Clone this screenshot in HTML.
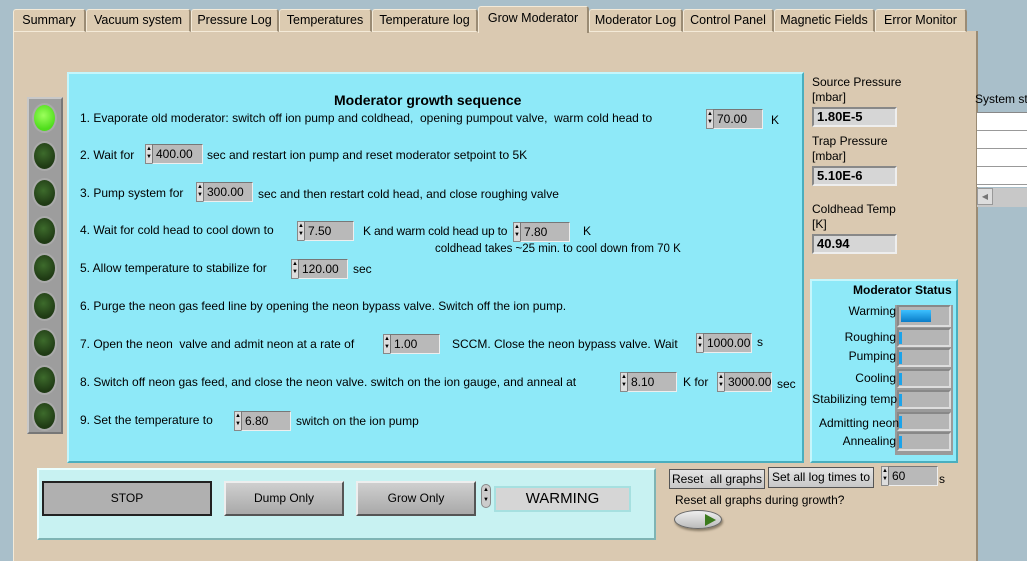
<!DOCTYPE html>
<html><head><style>
*{box-sizing:border-box;margin:0;padding:0}
body{width:1027px;height:561px;background:#a9bfca;position:relative;overflow:hidden;font-family:"Liberation Sans",sans-serif;font-size:12px;color:#000}
.a{position:absolute;white-space:nowrap}
.tab{position:absolute;top:9px;height:23px;background:#dccbb1;border:1px solid #f4ead8;border-right:2px solid #9a8b74;border-radius:3px 3px 0 0;text-align:center;line-height:20px;font-size:12.5px}
.num{position:absolute;height:20px;background:#b9b9b9;border:1px solid #777;border-right-color:#eee;border-bottom-color:#eee;padding-left:3px;line-height:18px;font-size:12px}
.sp{position:absolute;width:8px;height:20px;background:#ddd;border:1px solid #888;font-size:6px;line-height:8px;text-align:center}
.led{position:absolute;left:32px;width:25px;height:30px;border-radius:50%;background:radial-gradient(circle at 45% 40%,#3d6b2c,#1f3a14 70%);border:2px solid #aaa}
.ind{position:absolute;height:20px;background:#d6d6d6;border:2px solid #888;border-right-color:#eee;border-bottom-color:#eee;padding-left:3px;line-height:16px;font-weight:bold;font-size:13px}
.bar{position:absolute;left:897px;width:54px;height:19px;background:#b5b5b5;border:2px solid #888;border-right-color:#ddd;border-bottom-color:#ddd}
.bar i{position:absolute;left:0;top:2px;width:3px;height:12px;background:#1ba3ea}
.sl{position:absolute;right:131px;text-align:right;font-size:12px}
.btn{position:absolute;height:35px;background:linear-gradient(#cfcfcf,#a9a9a9);border:2px solid #555;border-top-color:#eee;border-left-color:#eee;text-align:center;line-height:30px;font-size:12px}
.gb{position:absolute;height:20px;background:linear-gradient(#e4e4e4,#c8c8c8);border:1px solid #555;text-align:center;line-height:18px;font-size:12px}
</style></head><body>
<div class="a" style="left:13px;top:31px;width:965px;height:530px;background:#dac9b1;border-left:1px solid #f4ead8;border-right:2px solid #9a8b74"></div>
<div class="tab" style="left:13px;width:73px">Summary</div>
<div class="tab" style="left:86px;width:105px">Vacuum system</div>
<div class="tab" style="left:191px;width:88px">Pressure Log</div>
<div class="tab" style="left:279px;width:93px">Temperatures</div>
<div class="tab" style="left:372px;width:106px">Temperature log</div>
<div class="tab" style="left:478px;top:6px;height:27px;width:111px;background:#dac9b1;border-bottom:none;line-height:22px">Grow Moderator</div>
<div class="tab" style="left:589px;width:94px">Moderator Log</div>
<div class="tab" style="left:683px;width:91px">Control Panel</div>
<div class="tab" style="left:774px;width:101px">Magnetic Fields</div>
<div class="tab" style="left:875px;width:92px">Error Monitor</div>

<div class="a" style="left:975px;top:92px;font-size:12px">System sta</div>
<div class="a" style="left:977px;top:112px;width:50px;height:75px;background:#fff;border-top:1px solid #888">
<div style="height:18px;border-bottom:1px solid #999"></div><div style="height:18px;border-bottom:1px solid #999"></div><div style="height:18px;border-bottom:1px solid #999"></div><div style="height:18px;border-bottom:1px solid #999"></div></div>
<div class="a" style="left:977px;top:188px;width:50px;height:19px;background:#c8c8c8"><div style="width:16px;height:17px;background:#ddd;border:1px solid #999;font-size:8px;color:#777;text-align:center;line-height:15px">◀</div></div>

<div class="a" style="left:27px;top:97px;width:36px;height:337px;background:#9d9d9d;border:2px solid #c8c8c8;border-right-color:#777;border-bottom-color:#777"></div>
<div class="led" style="top:103px;background:radial-gradient(circle at 45% 40%,#9cff5c,#4fdc1c 70%)"></div>
<div class="led" style="top:141px"></div><div class="led" style="top:178px"></div><div class="led" style="top:216px"></div><div class="led" style="top:253px"></div><div class="led" style="top:291px"></div><div class="led" style="top:328px"></div><div class="led" style="top:365px"></div><div class="led" style="top:401px"></div>

<div class="a" style="left:67px;top:72px;width:737px;height:391px;background:#8ee9f8;border:2px solid #c4f6fc;border-right-color:#4aaebe;border-bottom-color:#4aaebe"></div>
<div class="a" style="left:334px;top:92px;font-weight:bold;font-size:14px">Moderator growth sequence</div>
<div class="a" style="left:80px;top:111px">1. Evaporate old moderator: switch off ion pump and coldhead,&nbsp; opening pumpout valve,&nbsp; warm cold head to</div>
<div class="sp" style="left:706px;top:109px">▲<br>▼</div><div class="num" style="left:713px;top:109px;width:50px">70.00</div><div class="a" style="left:771px;top:113px">K</div>

<div class="a" style="left:80px;top:148px">2. Wait for</div>
<div class="sp" style="left:145px;top:144px">▲<br>▼</div><div class="num" style="left:152px;top:144px;width:51px">400.00</div>
<div class="a" style="left:207px;top:148px">sec and restart ion pump and reset moderator setpoint to 5K</div>

<div class="a" style="left:80px;top:186px">3. Pump system for</div>
<div class="sp" style="left:196px;top:182px">▲<br>▼</div><div class="num" style="left:203px;top:182px;width:50px">300.00</div>
<div class="a" style="left:258px;top:187px">sec and then restart cold head, and close roughing valve</div>

<div class="a" style="left:80px;top:223px">4. Wait for cold head to cool down to</div>
<div class="sp" style="left:297px;top:221px">▲<br>▼</div><div class="num" style="left:304px;top:221px;width:50px">7.50</div>
<div class="a" style="left:363px;top:224px;letter-spacing:-0.2px">K and warm cold head up to</div>
<div class="sp" style="left:513px;top:222px">▲<br>▼</div><div class="num" style="left:520px;top:222px;width:50px">7.80</div>
<div class="a" style="left:583px;top:224px">K</div>
<div class="a" style="left:435px;top:243px;font-size:11.5px">coldhead takes ~25 min. to cool down from 70 K</div>

<div class="a" style="left:80px;top:261px">5. Allow temperature to stabilize for</div>
<div class="sp" style="left:291px;top:259px">▲<br>▼</div><div class="num" style="left:298px;top:259px;width:50px">120.00</div>
<div class="a" style="left:353px;top:262px">sec</div>

<div class="a" style="left:80px;top:299px">6. Purge the neon gas feed line by opening the neon bypass valve. Switch off the ion pump.</div>

<div class="a" style="left:80px;top:337px">7. Open the neon&nbsp; valve and admit neon at a rate of</div>
<div class="sp" style="left:383px;top:334px">▲<br>▼</div><div class="num" style="left:390px;top:334px;width:50px">1.00</div>
<div class="a" style="left:452px;top:337px">SCCM. Close the neon bypass valve. Wait</div>
<div class="sp" style="left:696px;top:333px">▲<br>▼</div><div class="num" style="left:703px;top:333px;width:49px">1000.00</div>
<div class="a" style="left:757px;top:335px">s</div>

<div class="a" style="left:80px;top:375px">8. Switch off neon gas feed, and close the neon valve. switch on the ion gauge, and anneal at</div>
<div class="sp" style="left:620px;top:372px">▲<br>▼</div><div class="num" style="left:627px;top:372px;width:50px">8.10</div>
<div class="a" style="left:683px;top:375px">K for</div>
<div class="sp" style="left:717px;top:372px">▲<br>▼</div><div class="num" style="left:724px;top:372px;width:48px">3000.00</div>
<div class="a" style="left:777px;top:377px">sec</div>

<div class="a" style="left:80px;top:413px">9. Set the temperature to</div>
<div class="sp" style="left:234px;top:411px">▲<br>▼</div><div class="num" style="left:241px;top:411px;width:50px">6.80</div>
<div class="a" style="left:296px;top:414px">switch on the ion pump</div>

<div class="a" style="left:812px;top:75px;line-height:15px">Source Pressure<br>[mbar]</div>
<div class="ind" style="left:812px;top:107px;width:85px">1.80E-5</div>
<div class="a" style="left:812px;top:134px;line-height:15px">Trap Pressure<br>[mbar]</div>
<div class="ind" style="left:812px;top:166px;width:85px">5.10E-6</div>
<div class="a" style="left:812px;top:202px;line-height:15px">Coldhead Temp<br>[K]</div>
<div class="ind" style="left:812px;top:234px;width:85px">40.94</div>

<div class="a" style="left:810px;top:279px;width:148px;height:184px;background:#8ee9f8;border:2px solid #c4f6fc;border-right-color:#4aaebe;border-bottom-color:#4aaebe"></div>
<div class="a" style="left:853px;top:283px;font-weight:bold;font-size:12px">Moderator Status</div>
<div class="a" style="left:895px;top:305px;width:58px;height:150px;background:#9a9a9a"></div>
<div class="bar" style="top:305px;height:22px"><i style="width:30px;top:3px;height:12px;left:2px;background:linear-gradient(#3cc0ff,#0a7cc8)"></i></div>
<div class="bar" style="top:328px"><i></i></div>
<div class="bar" style="top:348px"><i></i></div>
<div class="bar" style="top:369px"><i></i></div>
<div class="bar" style="top:390px"><i></i></div>
<div class="bar" style="top:412px"><i></i></div>
<div class="bar" style="top:432px"><i></i></div>
<div class="sl" style="top:304px">Warming</div>
<div class="sl" style="top:330px">Roughing</div>
<div class="sl" style="top:349px">Pumping</div>
<div class="sl" style="top:371px">Cooling</div>
<div class="sl" style="top:392px;right:130px">Stabilizing temp</div>
<div class="sl" style="top:416px;right:128px">Admitting neon</div>
<div class="sl" style="top:434px">Annealing</div>

<div class="a" style="left:37px;top:468px;width:619px;height:72px;background:#c8f2f2;border:2px solid #eaffff;border-right-color:#7fb4b4;border-bottom-color:#7fb4b4"></div>
<div class="btn" style="left:42px;top:481px;width:170px;background:#b0b0b0;border:2px solid #222;border-top-color:#222">STOP</div>
<div class="btn" style="left:224px;top:481px;width:120px">Dump Only</div>
<div class="btn" style="left:356px;top:481px;width:120px">Grow Only</div>
<div class="a" style="left:481px;top:484px;width:10px;height:24px;border-radius:5px;background:#ccc;border:1px solid #888;font-size:6px;line-height:10px;text-align:center">▲<br>▼</div>
<div class="a" style="left:494px;top:486px;width:137px;height:26px;background:#d6d6d6;border:2px solid #a6e0e0;text-align:center;line-height:22px;font-size:15px">WARMING</div>

<div class="gb" style="left:669px;top:469px;width:96px">Reset&nbsp; all graphs</div>
<div class="gb" style="left:768px;top:467px;width:106px;height:21px">Set all log times to</div>
<div class="sp" style="left:881px;top:466px">▲<br>▼</div><div class="num" style="left:888px;top:466px;width:50px;height:20px">60</div>
<div class="a" style="left:939px;top:472px">s</div>
<div class="a" style="left:675px;top:493px">Reset all graphs during growth?</div>
<div class="a" style="left:674px;top:510px;width:48px;height:19px;border-radius:50%;background:linear-gradient(#eee,#bbb);border:1px solid #666;box-shadow:1px 2px 2px #8a7d68"></div>
<div class="a" style="left:705px;top:514px;width:0;height:0;border-top:6px solid transparent;border-bottom:6px solid transparent;border-left:11px solid #3b7a1c"></div>
</body></html>
